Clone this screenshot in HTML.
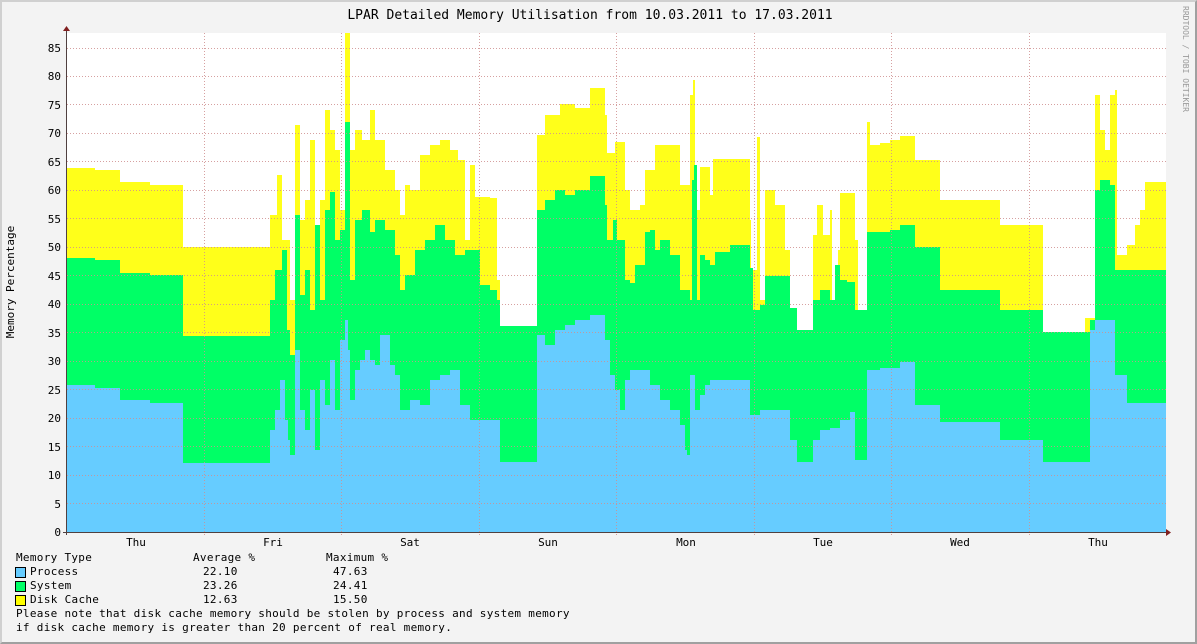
<!DOCTYPE html>
<html><head><meta charset="utf-8"><style>
html,body{margin:0;padding:0}
body{width:1197px;height:644px;background:#f3f3f3;position:relative;overflow:hidden;font-family:"DejaVu Sans Mono","Liberation Mono",monospace}
.b{position:absolute;left:0;top:0;border-top:2px solid #d0d0d0;border-left:2px solid #d0d0d0;border-right:2px solid #a0a0a0;border-bottom:2px solid #a0a0a0;box-sizing:border-box;width:1197px;height:644px}
.t{position:absolute;font-size:11px;color:#000;white-space:pre;line-height:13px;letter-spacing:0.3px}
.sw{position:absolute;width:9px;height:9px;border:1px solid #000}
</style></head><body><div class="b"></div>
<svg width="1197" height="644" style="position:absolute;left:0;top:0">
<rect x="67" y="33" width="1099" height="499" fill="#fff"/>
<path fill="#ffff1a" d="M67,532 V168 H95 V170 H120 V182 H150 V185 H183 V247 H270 V215 H277 V175 H282 V240 H290 V300 H295 V125 H300 V220 H305 V200 H310 V140 H315 V300 H320 V200 H325 V110 H330 V130 H335 V150 H340 V210 H345 V33 H350 V150 H355 V130 H362 V140 H370 V110 H375 V140 H385 V170 H395 V190 H400 V215 H405 V185 H410 V190 H420 V155 H430 V145 H440 V140 H450 V150 H458 V160 H465 V240 H470 V165 H475 V197 H490 V198 H497 V280 H500 V327 H537 V135 H545 V115 H560 V104 H575 V108 H590 V88 H605 V115 H607 V153 H615 V142 H625 V190 H630 V210 H640 V205 H645 V170 H655 V145 H665 V145 H680 V185 H690 V95 H693 V80 H695 V210 H700 V167 H710 V195 H713 V159 H750 V220 H751 V270 H757 V137 H760 V300 H765 V190 H775 V205 H785 V250 H790 V308 H797 V330 H813 V235 H817 V205 H823 V235 H830 V210 H832 V300 H838 V250 H840 V193 H855 V240 H858 V320 H867 V122 H870 V145 H880 V143 H890 V140 H900 V136 H915 V160 H940 V200 H1000 V225 H1043 V332 H1085 V318 H1095 V95 H1100 V130 H1105 V150 H1110 V95 H1115 V90 H1117 V255 H1127 V245 H1135 V225 H1140 V210 H1145 V182 H1166 V532 Z"/>
<path fill="#00ff66" d="M67,532 V258 H95 V260 H120 V273 H150 V275 H183 V336 H270 V300 H275 V270 H282 V250 H287 V330 H290 V355 H295 V215 H300 V295 H305 V270 H310 V310 H315 V225 H320 V300 H325 V210 H330 V192 H335 V240 H340 V230 H345 V122 H350 V280 H355 V220 H362 V210 H370 V232 H375 V220 H385 V230 H395 V255 H400 V290 H405 V275 H415 V250 H425 V240 H435 V225 H445 V240 H455 V255 H465 V250 H480 V285 H490 V290 H497 V300 H500 V326 H537 V210 H545 V200 H555 V190 H565 V195 H575 V190 H590 V176 H605 V205 H607 V240 H613 V220 H617 V240 H625 V280 H630 V283 H635 V265 H645 V232 H650 V230 H655 V250 H660 V240 H670 V255 H680 V290 H690 V300 H692 V180 H694 V165 H697 V300 H700 V255 H705 V260 H710 V265 H715 V252 H730 V245 H750 V268 H753 V310 H760 V305 H765 V276 H790 V308 H797 V330 H813 V300 H820 V290 H830 V300 H835 V265 H840 V280 H847 V282 H855 V310 H867 V232 H890 V230 H900 V225 H915 V247 H940 V290 H1000 V310 H1043 V332 H1090 V320 H1095 V190 H1100 V180 H1110 V185 H1115 V270 H1127 V270 H1166 V532 Z"/>
<path fill="#66ccff" d="M67,532 V385 H95 V388 H120 V400 H150 V403 H183 V463 H270 V430 H275 V410 H280 V380 H285 V420 H288 V440 H290 V455 H295 V350 H300 V410 H305 V430 H310 V390 H315 V450 H320 V380 H325 V405 H330 V360 H335 V410 H340 V340 H345 V320 H348 V350 H350 V400 H355 V370 H360 V360 H365 V350 H370 V360 H375 V365 H380 V335 H390 V365 H395 V375 H400 V410 H410 V400 H420 V405 H430 V380 H440 V375 H450 V370 H460 V405 H470 V420 H500 V462 H537 V335 H545 V345 H555 V330 H565 V325 H575 V320 H590 V315 H605 V340 H610 V375 H615 V390 H620 V410 H625 V380 H630 V370 H640 V370 H650 V385 H660 V400 H670 V410 H680 V425 H685 V450 H687 V455 H690 V375 H695 V410 H700 V395 H705 V385 H710 V380 H745 V380 H750 V415 H760 V410 H790 V440 H797 V462 H813 V440 H820 V430 H830 V428 H840 V420 H850 V412 H855 V460 H867 V370 H880 V368 H900 V362 H915 V405 H940 V422 H1000 V440 H1043 V462 H1090 V330 H1095 V320 H1115 V375 H1127 V403 H1166 V532 Z"/>
<g stroke="#d09090" stroke-width="1" stroke-dasharray="1,2" opacity="0.85">
<line x1="67" x2="1166" y1="503.5" y2="503.5"/><line x1="67" x2="1166" y1="475.5" y2="475.5"/><line x1="67" x2="1166" y1="446.5" y2="446.5"/><line x1="67" x2="1166" y1="418.5" y2="418.5"/><line x1="67" x2="1166" y1="389.5" y2="389.5"/><line x1="67" x2="1166" y1="361.5" y2="361.5"/><line x1="67" x2="1166" y1="332.5" y2="332.5"/><line x1="67" x2="1166" y1="304.5" y2="304.5"/><line x1="67" x2="1166" y1="275.5" y2="275.5"/><line x1="67" x2="1166" y1="247.5" y2="247.5"/><line x1="67" x2="1166" y1="218.5" y2="218.5"/><line x1="67" x2="1166" y1="190.5" y2="190.5"/><line x1="67" x2="1166" y1="161.5" y2="161.5"/><line x1="67" x2="1166" y1="133.5" y2="133.5"/><line x1="67" x2="1166" y1="104.5" y2="104.5"/><line x1="67" x2="1166" y1="76.5" y2="76.5"/><line x1="67" x2="1166" y1="48.5" y2="48.5"/>
<line x1="204.5" x2="204.5" y1="33" y2="536"/><line x1="341.5" x2="341.5" y1="33" y2="536"/><line x1="479.5" x2="479.5" y1="33" y2="536"/><line x1="616.5" x2="616.5" y1="33" y2="536"/><line x1="754.5" x2="754.5" y1="33" y2="536"/><line x1="891.5" x2="891.5" y1="33" y2="536"/><line x1="1029.5" x2="1029.5" y1="33" y2="536"/>
</g>
<g stroke="#504040" stroke-width="1">
<line x1="66.5" y1="30" x2="66.5" y2="535"/><line x1="63" y1="532.5" x2="1168" y2="532.5"/>
</g>
<polygon points="63,31 70,31 66.5,26" fill="#802020"/>
<polygon points="1166,529 1166,536 1171,532.5" fill="#802020"/>
<text x="1183" y="6" transform="rotate(90 1183 6)" font-family="DejaVu Sans Mono,monospace" font-size="8" fill="#999">RRDTOOL / TOBI OETIKER</text>
<text x="14" y="282" transform="rotate(-90 14 282)" text-anchor="middle" font-family="DejaVu Sans Mono,monospace" font-size="11" fill="#000">Memory Percentage</text>
<g font-family="DejaVu Sans Mono,monospace" font-size="11" fill="#000" text-anchor="end">
<text x="61" y="536">0</text><text x="61" y="508">5</text><text x="61" y="479">10</text><text x="61" y="451">15</text><text x="61" y="422">20</text><text x="61" y="394">25</text><text x="61" y="365">30</text><text x="61" y="337">35</text><text x="61" y="308">40</text><text x="61" y="280">45</text><text x="61" y="251">50</text><text x="61" y="223">55</text><text x="61" y="194">60</text><text x="61" y="166">65</text><text x="61" y="137">70</text><text x="61" y="109">75</text><text x="61" y="80">80</text><text x="61" y="52">85</text>
</g>
<g font-family="DejaVu Sans Mono,monospace" font-size="11" fill="#000" text-anchor="middle">
<text x="136" y="546">Thu</text><text x="273" y="546">Fri</text><text x="410" y="546">Sat</text><text x="548" y="546">Sun</text><text x="686" y="546">Mon</text><text x="823" y="546">Tue</text><text x="960" y="546">Wed</text><text x="1098" y="546">Thu</text>
<text x="590" y="19" font-size="13">LPAR Detailed Memory Utilisation from 10.03.2011 to 17.03.2011</text>
</g>
</svg>
<div class="t" style="left:16px;top:551px">Memory Type</div><div class="t" style="left:193px;top:551px">Average %</div><div class="t" style="left:326px;top:551px">Maximum %</div>
<div class="sw" style="left:15px;top:567px;background:#66ccff"></div><div class="t" style="left:30px;top:565px">Process</div><div class="t" style="left:203px;top:565px">22.10</div><div class="t" style="left:333px;top:565px">47.63</div>
<div class="sw" style="left:15px;top:581px;background:#00ff66"></div><div class="t" style="left:30px;top:579px">System</div><div class="t" style="left:203px;top:579px">23.26</div><div class="t" style="left:333px;top:579px">24.41</div>
<div class="sw" style="left:15px;top:595px;background:#ffff00"></div><div class="t" style="left:30px;top:593px">Disk Cache</div><div class="t" style="left:203px;top:593px">12.63</div><div class="t" style="left:333px;top:593px">15.50</div>
<div class="t" style="left:16px;top:607px">Please note that disk cache memory should be stolen by process and system memory</div>
<div class="t" style="left:16px;top:621px">if disk cache memory is greater than 20 percent of real memory.</div>
</body></html>
